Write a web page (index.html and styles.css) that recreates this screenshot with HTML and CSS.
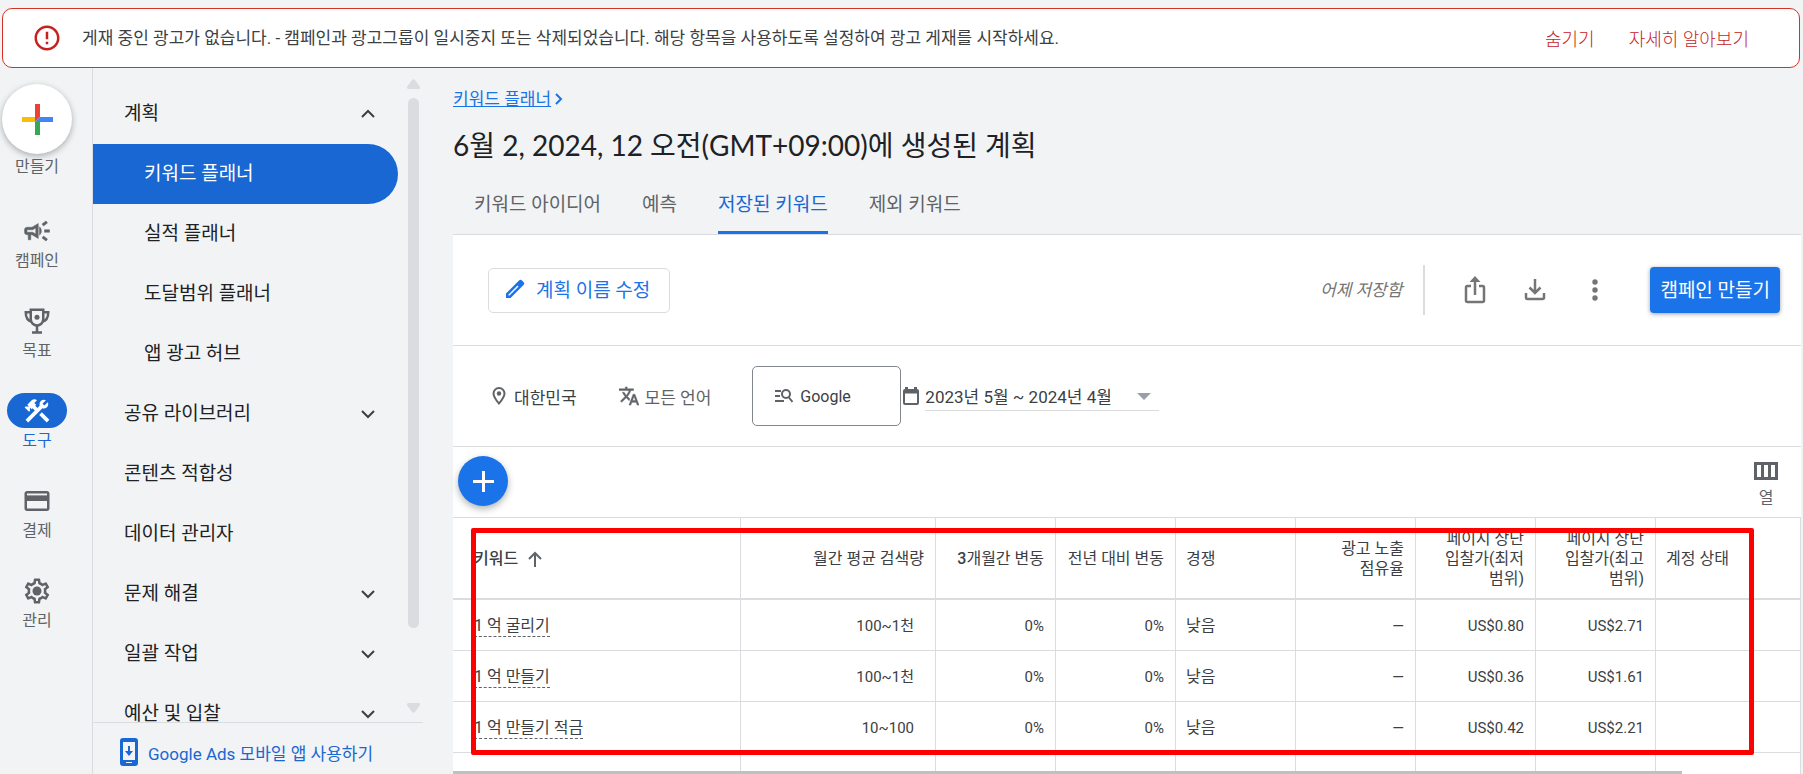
FILE: index.html
```html
<!DOCTYPE html>
<html lang="ko">
<head>
<meta charset="utf-8">
<meta name="viewport" content="width=device-width, initial-scale=1">
<title>키워드 플래너</title>
<link rel="stylesheet" href="styles.css">
</head>
<body>
<div class="banner" role="alert">
  <svg class="banner-icon" viewBox="0 0 24 24"><path d="M11 15h2v2h-2zm0-8h2v6h-2zm.99-5C6.47 2 2 6.48 2 12s4.47 10 9.99 10C17.52 22 22 17.52 22 12S17.52 2 11.99 2zM12 20c-4.42 0-8-3.58-8-8s3.58-8 8-8 8 3.58 8 8-3.58 8-8 8z"/></svg>
  <p class="banner-text">게재 중인 광고가 없습니다. - 캠페인과 광고그룹이 일시중지 또는 삭제되었습니다. 해당 항목을 사용하도록 설정하여 광고 게재를 시작하세요.</p>
  <button class="banner-action" type="button">숨기기</button>
  <button class="banner-action" type="button">자세히 알아보기</button>
</div>

<div class="shell">
  <nav class="rail" aria-label="기본 메뉴">
    <button class="rail-create" type="button">
      <span class="create-disc">
        <svg viewBox="-1 -1 32 32" width="32" height="32"><path fill="#ea4335" d="M13 0h5v13l-5 5z"/><path fill="#fbbc04" d="M0 13h13v5H0z"/><path fill="#34a853" d="M13 18h5v13h-5z"/><path fill="#4285f4" d="M18 13h13v5H13z"/></svg>
      </span>
      만들기
    </button>
    <a class="rail-item" href="#"><span class="rail-icon"><svg viewBox="0 0 24 24"><path stroke="currentColor" stroke-width=".4" d="M18 11v2h4v-2h-4zm-2 6.610c.96.71 2.210 1.650 3.200 2.390.4-.53.8-1.070 1.200-1.600-.99-.74-2.240-1.680-3.200-2.400-.4.54-.8 1.080-1.200 1.610zM20.400 5.600c-.4-.53-.8-1.070-1.200-1.600-.99.74-2.240 1.680-3.200 2.400.4.53.8 1.070 1.200 1.600.96-.72 2.210-1.650 3.200-2.400zM4 9c-1.100 0-2 .9-2 2v2c0 1.100.9 2 2 2h1v4h2v-4h1l5 3V6L8 9H4zm5.030 1.710L11 9.530v4.940l-1.970-1.180-.48-.29H4v-2h4.550l.48-.29zM15.500 12c0-1.330-.58-2.530-1.500-3.350v6.690c.92-.81 1.500-2.010 1.500-3.340z"/></svg></span>캠페인</a>
    <a class="rail-item" href="#"><span class="rail-icon"><svg viewBox="0 0 24 24"><g fill="none" stroke="currentColor" stroke-width="2"><path d="M7 3h10v7.500a5 5 0 0 1-10 0z"/><path d="M7 5H3c0 4 1.500 7 5 7.500M17 5h4c0 4-1.500 7-5 7.500M12 15.500V21M8 21.200h8"/></g><circle cx="12" cy="9" r="2"/></svg></span>목표</a>
    <a class="rail-item active" href="#" aria-current="page"><span class="rail-icon"><svg viewBox="0 0 24 24"><path d="M13.780 15.170l2.120-2.120 6 6-2.120 2.120z"/><path d="M17.500 10c1.930 0 3.500-1.570 3.500-3.500 0-.58-.16-1.120-.41-1.600l-2.700 2.700-1.490-1.490 2.700-2.700c-.48-.25-1.020-.41-1.600-.41-1.930 0-3.500 1.570-3.500 3.500 0 .41.08.8.21 1.160l-1.850 1.850-1.780-1.780.71-.71-1.410-1.410L12 3.490c-1.170-1.170-3.070-1.170-4.240 0L4.220 7.030l1.410 1.410H2.810l-.71.71 3.540 3.540.71-.71V9.150l1.410 1.410.71-.71 1.780 1.780-7.410 7.410 2.120 2.120L16.340 9.790c.36.13.75.21 1.160.21z"/></svg></span>도구</a>
    <a class="rail-item" href="#"><span class="rail-icon"><svg viewBox="0 0 24 24"><path d="M20 4H4c-1.110 0-2 .89-2 2v12c0 1.110.89 2 2 2h16c1.110 0 2-.89 2-2V6c0-1.110-.89-2-2-2zm0 14H4v-6h16v6zm0-10H4V6h16v2z"/><path d="M3 7.500h18V12H3z"/></svg></span>결제</a>
    <a class="rail-item" href="#"><span class="rail-icon"><svg viewBox="0 0 24 24"><path d="M19.430 12.980c.04-.32.07-.64.07-.98 0-.34-.03-.66-.07-.98l2.110-1.650c.19-.15.24-.42.12-.64l-2-3.460c-.09-.16-.26-.25-.44-.25-.06 0-.12.01-.17.03l-2.490 1c-.52-.4-1.080-.73-1.690-.98l-.38-2.650C14.460 2.180 14.250 2 14 2h-4c-.25 0-.46.18-.49.42l-.38 2.650c-.61.25-1.170.59-1.690.98l-2.490-1c-.06-.02-.12-.03-.18-.03-.17 0-.34.09-.43.25l-2 3.460c-.13.22-.07.49.12.64l2.110 1.650c-.04.32-.07.65-.07.98 0 .33.03.66.07.98l-2.110 1.650c-.19.15-.24.42-.12.64l2 3.460c.09.16.26.25.44.25.06 0 .12-.01.17-.03l2.490-1c.52.4 1.080.73 1.690.98l.38 2.650c.03.24.24.42.49.42h4c.25 0 .46-.18.49-.42l.38-2.650c.61-.25 1.170-.59 1.690-.98l2.490 1c.06.02.12.03.18.03.17 0 .34-.09.43-.25l2-3.460c.12-.22.07-.49-.12-.64l-2.110-1.650zm-1.980-1.710c.04.31.05.52.05.73 0 .21-.02.43-.05.73l-.14 1.130.89.7 1.080.84-.7 1.210-1.270-.51-1.040-.42-.9.68c-.43.32-.84.56-1.250.73l-1.060.43-.16 1.130-.2 1.350h-1.400l-.19-1.350-.16-1.130-1.060-.43c-.43-.18-.83-.41-1.230-.71l-.91-.7-1.060.43-1.270.51-.7-1.210 1.080-.84.89-.7-.14-1.130c-.03-.31-.05-.54-.05-.74s.02-.43.05-.73l.14-1.130-.89-.7-1.080-.84.7-1.210 1.270.51 1.040.42.9-.68c.43-.32.84-.56 1.250-.73l1.060-.43.16-1.130.2-1.350h1.390l.19 1.350.16 1.130 1.060.43c.43.18.83.41 1.230.71l.91.7 1.060-.43 1.270-.51.7 1.210-1.070.85-.89.7.14 1.130z"/><circle cx="12" cy="12" r="3.600"/></svg></span>관리</a>
  </nav>

  <aside class="side">
    <div class="side-scroll">
      <ul class="menu">
        <li><a class="menu-item" href="#">계획<svg class="chev" viewBox="0 0 16 10"><path d="M2 8l6-6 6 6"/></svg></a></li>
        <li><a class="menu-item sub selected" href="#" aria-current="page">키워드 플래너</a></li>
        <li><a class="menu-item sub" href="#">실적 플래너</a></li>
        <li><a class="menu-item sub" href="#">도달범위 플래너</a></li>
        <li><a class="menu-item sub" href="#">앱 광고 허브</a></li>
        <li><a class="menu-item" href="#">공유 라이브러리<svg class="chev" viewBox="0 0 16 10"><path d="M2 2l6 6 6-6"/></svg></a></li>
        <li><a class="menu-item" href="#">콘텐츠 적합성</a></li>
        <li><a class="menu-item" href="#">데이터 관리자</a></li>
        <li><a class="menu-item" href="#">문제 해결<svg class="chev" viewBox="0 0 16 10"><path d="M2 2l6 6 6-6"/></svg></a></li>
        <li><a class="menu-item" href="#">일괄 작업<svg class="chev" viewBox="0 0 16 10"><path d="M2 2l6 6 6-6"/></svg></a></li>
        <li><a class="menu-item" href="#">예산 및 입찰<svg class="chev" viewBox="0 0 16 10"><path d="M2 2l6 6 6-6"/></svg></a></li>
      </ul>
      <div class="scrollbar" aria-hidden="true">
        <svg width="13" height="10" viewBox="0 0 13 10"><path d="M5 1q1.500-1.500 3 0l5 7q0 2-1 2H1q-1 0-1-2z"/></svg>
        <div class="track"><div class="thumb"></div></div>
        <svg width="13" height="10" viewBox="0 0 13 10"><path d="M5 9q1.500 1.500 3 0l5-7q0-2-1-2H1Q0 0 0 2z"/></svg>
      </div>
    </div>
    <a class="app-link" href="#">
      <svg width="18" height="28" viewBox="0 0 18 28"><path fill-rule="evenodd" d="M3 0h12a3 3 0 0 1 3 3v22a3 3 0 0 1-3 3H3a3 3 0 0 1-3-3V3a3 3 0 0 1 3-3zM3 4v18h12V4zM6 24v1h6v-1zM8 8h2v5h3l-4 5-4-5h3z"/></svg>
      Google Ads 모바일 앱 사용하기
    </a>
  </aside>

  <main class="main">
    <header class="head">
      <a class="crumb" href="#"><span>키워드 플래너</span><svg width="8" height="12" viewBox="0 0 8 12"><path d="M1 1l5 5-5 5"/></svg></a>
      <h1 class="title">6월 2, 2024, 12 오전(GMT+09:00)에 생성된 계획</h1>
      <div class="tabs" role="tablist">
        <button class="tab" type="button" role="tab">키워드 아이디어</button>
        <button class="tab" type="button" role="tab">예측</button>
        <button class="tab on" type="button" role="tab" aria-selected="true">저장된 키워드</button>
        <button class="tab" type="button" role="tab">제외 키워드</button>
      </div>
    </header>

    <div class="panel">
      <div class="toolbar">
        <button class="edit-btn" type="button">
          <svg width="20" height="20" viewBox="0 0 20 20"><path fill-rule="evenodd" d="M1 19v-4.500L14 1.500q1.500-1.500 3 0l1.500 1.500q1.500 1.500 0 3L5.500 19zM3.500 16.500h1l9-9-1-1-9 9z"/></svg>
          계획 이름 수정
        </button>
        <span class="saved">어제 저장함</span>
        <button class="icon-btn" type="button" aria-label="공유"><svg width="22" height="28" viewBox="0 0 22 28"><g fill="none" stroke="currentColor" stroke-width="2.500"><path d="M7 10H3.500Q2 10 2 11.500v13Q2 26 3.500 26h15q1.500 0 1.500-1.500v-13Q20 10 18.500 10H15M11 19V3"/></g><path d="M11 0l5.500 6h-11z"/></svg></button>
        <button class="icon-btn" type="button" aria-label="다운로드"><svg width="22" height="22" viewBox="0 0 22 22"><g fill="none" stroke="currentColor" stroke-width="2.500"><path d="M2 14v4.500Q2 20 3.500 20h15q1.500 0 1.500-1.500V14M11 0v13M5.500 8.500L11 14l5.500-5.500"/></g></svg></button>
        <button class="icon-btn" type="button" aria-label="더보기"><svg width="22" height="22" viewBox="0 0 22 22"><circle cx="11" cy="3" r="2.700"/><circle cx="11" cy="11" r="2.700"/><circle cx="11" cy="19" r="2.700"/></svg></button>
        <button class="primary" type="button">캠페인 만들기</button>
      </div>

      <div class="filters">
        <button class="filter place" type="button"><svg width="14" height="18" viewBox="0 0 14 18"><path fill-rule="evenodd" d="M7 0a6.500 6.500 0 0 1 6.500 6.500C13.500 11 7 18 7 18S.5 11 .5 6.500A6.500 6.500 0 0 1 7 0zm0 2a4.500 4.500 0 0 0-4.500 4.500c0 2.700 3 6.500 4.500 8.500 1.500-2 4.500-5.800 4.500-8.500A4.500 4.500 0 0 0 7 2z"/><circle cx="7" cy="6.500" r="2.200"/></svg>대한민국</button>
        <button class="filter lang" type="button"><svg width="20" height="20" viewBox="1 1 22 22"><path stroke="currentColor" stroke-width=".5" d="M12.870 15.070l-2.540-2.510.03-.03c1.740-1.940 2.980-4.170 3.710-6.530H17V4h-7V2H8v2H1v1.990h11.170C11.500 7.920 10.440 9.750 9 11.350 8.070 10.320 7.300 9.190 6.690 8h-2c.73 1.630 1.730 3.170 2.980 4.560l-5.090 5.020L4 19l5-5 3.110 3.110.76-2.040zM18.500 10h-2L12 22h2l1.120-3h4.750L21 22h2l-4.500-12zm-2.620 7l1.620-4.330L19.120 17h-3.240z"/></svg>모든 언어</button>
        <button class="network" type="button"><svg width="18" height="14" viewBox="0 0 18 14"><path d="M0 1h6v2H0zM0 6h5v2H0zM0 11h9v2H0z"/><g fill="none" stroke="currentColor" stroke-width="2"><circle cx="11" cy="5" r="4"/><path d="M13.500 8l4 5"/></g></svg>Google</button>
        <svg class="calendar" width="16" height="18" viewBox="0 0 16 18"><path fill-rule="evenodd" d="M2 2V0h3v2h6V0h3v2q2 0 2 2v12q0 2-2 2H2q-2 0-2-2V4q0-2 2-2zm0 4.500V16h12V6.500z"/></svg>
        <button class="range" type="button">2023년 5월 ~ 2024년 4월<span class="caret"></span></button>
      </div>

      <div class="actions">
        <button class="add" type="button" aria-label="키워드 추가"><svg width="21" height="21" viewBox="0 0 21 21"><path d="M9 0h3v9h9v3h-9v9H9v-9H0V9h9z"/></svg></button>
        <button class="columns" type="button"><svg width="24" height="18" viewBox="0 0 24 18"><path fill-rule="evenodd" d="M0 0h24v18H0zM3 3v12h4V3zm7 0v12h4V3zm7 0v12h4V3z"/></svg>열</button>
      </div>

      <div class="table-area">
        <table class="grid">
          <colgroup><col class="c-key"><col class="c-vol"><col class="c-std"><col class="c-std"><col class="c-std"><col class="c-std"><col class="c-std"><col class="c-std"><col></colgroup>
          <thead>
            <tr>
              <th class="l key strong">키워드<svg width="14" height="16" viewBox="0 0 14 16"><path d="M7 16V2M1 8l6-6 6 6"/></svg></th>
              <th>월간 평균 검색량</th>
              <th class="tight"><b>3</b>개월간 변동</th>
              <th class="tight">전년 대비 변동</th>
              <th class="l">경쟁</th>
              <th>광고 노출<br>점유율</th>
              <th>페이지 상단<br>입찰가(최저<br>범위)</th>
              <th>페이지 상단<br>입찰가(최고<br>범위)</th>
              <th class="l">계정 상태</th>
            </tr>
          </thead>
          <tbody>
            <tr><td class="l key"><span class="kw">1 억 굴리기</span></td><td class="vol">100~1천</td><td>0%</td><td>0%</td><td class="l">낮음</td><td>—</td><td>US$0.80</td><td>US$2.71</td><td></td></tr>
            <tr><td class="l key"><span class="kw">1 억 만들기</span></td><td class="vol">100~1천</td><td>0%</td><td>0%</td><td class="l">낮음</td><td>—</td><td>US$0.36</td><td>US$1.61</td><td></td></tr>
            <tr><td class="l key"><span class="kw">1 억 만들기 적금</span></td><td class="vol">10~100</td><td>0%</td><td>0%</td><td class="l">낮음</td><td>—</td><td>US$0.42</td><td>US$2.21</td><td></td></tr>
            <tr><td></td><td></td><td></td><td></td><td></td><td></td><td></td><td></td><td></td></tr>
          </tbody>
        </table>
        <div class="highlight" aria-hidden="true"></div>
        <div class="h-scroll" aria-hidden="true"></div>
      </div>
    </div>
  </main>
</div>
</body>
</html>
```

FILE: styles.css
```css
* { box-sizing: border-box; }

body {
  margin: 0;
  height: 100vh;
  overflow: hidden;
  display: flex;
  flex-direction: column;
  background: #f1f3f4;
  color: #3c4043;
  font-family: Roboto, "Noto Sans CJK KR", sans-serif;
  font-size: 16px;
  font-weight: 400;
}

button {
  border: 0;
  padding: 0;
  background: none;
  color: inherit;
  font: inherit;
  white-space: nowrap;
}

a { color: inherit; text-decoration: none; }
svg { display: block; flex: none; fill: currentColor; }

/* Alert banner */
.banner {
  flex: none;
  margin: 8px 3px 0 2px;
  height: 60px;
  padding: 0 50px 0 29px;
  display: flex;
  align-items: center;
  background: #fff;
  border: 1px solid #d93025;
  border-radius: 10px;
  color: #c5221f;
}
.banner-icon { width: 30px; height: 30px; }
.banner-text {
  flex: 1;
  margin: 0 0 0 20px;
  padding-bottom: 3px;
  color: #3c4043;
  font-size: 17px;
  white-space: nowrap;
}
.banner-action { margin-left: 34px; font-size: 18px; font-weight: 300; }

.shell { flex: 1; min-height: 0; display: flex; }

/* Icon rail */
.rail {
  flex: none;
  width: 93px;
  padding: 16px 18px 0 0;
  display: flex;
  flex-direction: column;
  align-items: center;
  border-right: 1px solid #dadce0;
  color: #5f6368;
}
.rail-create {
  height: 129px;
  display: flex;
  flex-direction: column;
  align-items: center;
  line-height: 26px;
}
.create-disc {
  width: 70px;
  height: 70px;
  display: grid;
  place-items: center;
  border-radius: 50%;
  background: #fff;
  box-shadow: 0 2px 6px rgba(60, 64, 67, .4);
}
.rail-item {
  height: 90px;
  display: flex;
  flex-direction: column;
  align-items: center;
  line-height: 26px;
}
.rail-icon {
  width: 60px;
  height: 35px;
  display: grid;
  place-items: center;
  border-radius: 18px;
}
.rail-icon svg { width: 30px; height: 30px; }
.rail-item.active { color: #1967d2; }
.rail-item.active .rail-icon { background: #1967d2; color: #fff; }

/* Section menu */
.side {
  flex: none;
  width: 330px;
  display: flex;
  flex-direction: column;
  color: #202124;
}
.side-scroll {
  flex: 1;
  min-height: 0;
  display: flex;
  gap: 6px;
  overflow: hidden;
  border-bottom: 1px solid #dadce0;
}
.menu { flex: 1; margin: 0; padding: 16px 0 0; list-style: none; }
.menu-item {
  height: 60px;
  padding: 0 22px 6px 31px;
  display: flex;
  align-items: center;
  justify-content: space-between;
  font-size: 19px;
}
.menu-item.sub { padding-left: 51px; }
.menu-item.selected { background: #1967d2; color: #fff; border-radius: 0 30px 30px 0; }
.chev { width: 16px; height: 10px; margin-top: 6px; fill: none; stroke: #3c4043; stroke-width: 2; }
.scrollbar {
  flex: none;
  width: 19px;
  padding: 11px 0 9px;
  display: flex;
  flex-direction: column;
  align-items: center;
  gap: 9px;
  color: #dadce0;
}
.track { flex: 1; width: 11px; }
.thumb { height: 89%; border-radius: 6px; background: #dadce0; }
.app-link {
  flex: none;
  height: 51px;
  padding: 7px 0 0 27px;
  display: flex;
  align-items: center;
  gap: 10px;
  color: #1967d2;
  font-size: 17px;
}

/* Page header */
.main { flex: 1; min-width: 0; display: flex; flex-direction: column; padding-left: 30px; }
.head { flex: none; }
.crumb {
  width: max-content;
  margin-top: 19px;
  display: flex;
  align-items: center;
  gap: 4px;
  color: #1a73e8;
  font-size: 17px;
  line-height: 24px;
}
.crumb span { text-decoration: underline; }
.crumb svg { fill: none; stroke: currentColor; stroke-width: 2; }
.title {
  margin: 14px 0 0;
  color: #202124;
  font-family: Lato, "Noto Sans CJK KR", sans-serif;
  font-size: 28px;
  font-weight: 400;
  line-height: 40px;
}
.tabs { height: 69px; padding-left: 21px; display: flex; gap: 41px; }
.tab { padding-top: 9px; border-bottom: 3px solid transparent; color: #5f6368; font-size: 19px; }
.tab.on { color: #1967d2; border-bottom-color: #1a73e8; }

.panel {
  flex: 1;
  min-height: 0;
  margin-right: 2px;
  display: flex;
  flex-direction: column;
  background: #fff;
  border-top: 1px solid #dadce0;
}

/* Plan toolbar */
.toolbar {
  flex: none;
  height: 111px;
  padding: 0 21px 0 35px;
  display: flex;
  align-items: center;
  border-bottom: 1px solid #dadce0;
}
.edit-btn {
  height: 45px;
  padding: 0 19px 3px 16px;
  display: flex;
  align-items: center;
  gap: 11px;
  border: 1px solid #dadce0;
  border-radius: 5px;
  color: #1a73e8;
  font-size: 19px;
}
.saved {
  margin-left: auto;
  margin-right: 20px;
  padding-right: 21px;
  border-right: 2px solid #dadce0;
  color: #757575;
  font-size: 17px;
  font-style: italic;
  line-height: 50px;
}
.icon-btn { width: 60px; height: 48px; display: grid; place-items: center; color: #757575; }
.primary {
  height: 46px;
  margin-left: 25px;
  padding: 0 10px 3px;
  border-radius: 4px;
  background: #1a73e8;
  color: #fff;
  font-size: 19px;
  box-shadow: 0 1px 4px rgba(60, 64, 67, .5);
}

/* Filters */
.filters {
  flex: none;
  height: 101px;
  padding-left: 39px;
  display: flex;
  align-items: center;
  border-bottom: 1px solid #dadce0;
}
.filter { display: flex; align-items: center; font-size: 17px; }
.filter svg { color: #5f6368; }
.place { gap: 8px; }
.lang { gap: 6px; margin: 0 41px 0 42px; color: #5f6368; }
.network {
  width: 149px;
  height: 60px;
  padding-left: 22px;
  display: flex;
  align-items: center;
  gap: 7px;
  border: 1px solid #80868b;
  border-radius: 5px;
}
.network svg { color: #5f6368; }
.calendar { margin: 0 6px 0 2px; color: #5f6368; }
.range {
  width: 234px;
  padding: 2px 8px 0 0;
  display: flex;
  align-items: center;
  justify-content: space-between;
  border-bottom: 1px solid #dadce0;
  font-size: 17px;
  line-height: 26px;
}
.caret { border: 7px solid transparent; border-top-color: #9aa0a6; border-bottom: 0; }

/* Table actions */
.actions {
  flex: none;
  height: 70px;
  padding: 0 23px 2px 5px;
  display: flex;
  align-items: center;
  justify-content: space-between;
}
.add {
  width: 50px;
  height: 50px;
  display: grid;
  place-items: center;
  border-radius: 50%;
  background: #1a73e8;
  color: #fff;
  box-shadow: 0 3px 7px rgba(60, 64, 67, .4);
}
.columns {
  padding-top: 10px;
  display: flex;
  flex-direction: column;
  align-items: center;
  gap: 6px;
  color: #5f6368;
  line-height: 24px;
}

/* Keyword table */
.table-area { position: relative; flex: 1; min-height: 0; overflow: hidden; }
.grid {
  width: 100%;
  table-layout: fixed;
  border-collapse: separate;
  border-spacing: 0;
  border-top: 1px solid #dadce0;
}
.c-key { width: 288px; }
.c-vol { width: 195px; }
.c-std { width: 120px; }
.grid th, .grid td {
  padding: 2px 11px 0;
  border-right: 1px solid #dadce0;
  border-bottom: 1px solid #dadce0;
  text-align: right;
  font-weight: 400;
  line-height: 20px;
  white-space: nowrap;
}
.grid th { height: 82px; border-bottom-width: 2px; }
.grid td { height: 51px; font-size: 15px; }
.grid .tight { padding-left: 0; }
.grid .l { text-align: left; padding-left: 10px; font-size: 16px; }
.grid .key { padding-left: 21px; }
.grid .vol { padding-right: 21px; }
.grid .strong, .grid b { font-weight: 500; }
.grid th svg { display: inline-block; margin-left: 10px; vertical-align: -3px; fill: none; stroke: #5f6368; stroke-width: 2; }
.kw { display: inline-block; border-bottom: 1px dashed #5f6368; }

/* Frame drawn over the keyword rows */
.highlight {
  position: absolute;
  top: 11px;
  right: 47px;
  bottom: 19px;
  left: 18px;
  border: 5px solid #f00;
  border-radius: 2px;
}
.h-scroll { position: absolute; left: 0; right: 119px; bottom: 0; height: 3px; background: #bdc1c6; }
```
